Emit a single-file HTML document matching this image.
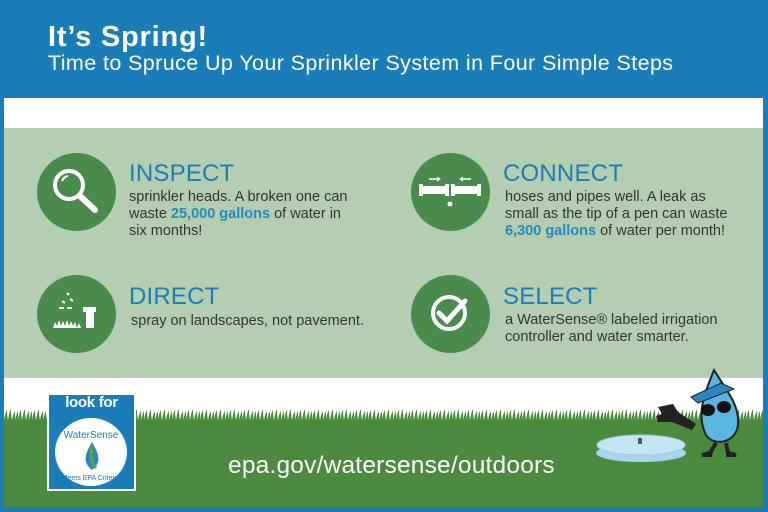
<!DOCTYPE html>
<html><head><meta charset="utf-8"><style>
*{margin:0;padding:0;box-sizing:border-box}
body{width:768px;height:512px;overflow:hidden;background:#1a7db8;position:relative;font-family:"Liberation Sans",Arial,sans-serif}
.abs{position:absolute}
h1{position:absolute;left:48px;top:21px;color:#fff;font-size:29px;font-weight:bold;letter-spacing:0.8px}
h2{position:absolute;left:48px;top:51px;color:#fff;font-size:21.5px;font-weight:normal;letter-spacing:0.4px}
.white{left:4px;top:98px;width:759px;height:409px;background:#fff}
.lg{left:4px;top:128px;width:759px;height:250px;background:#b3ceb0}
.grass{left:4px;top:428px;width:759px;height:79px;background:#4b8a3f}
.circ{width:79px;height:78px;border-radius:50%;background:#4a8a4c}
.t{color:#1f7bb5;font-size:24px;letter-spacing:0.2px}
.p{color:#333;font-size:14.5px;line-height:17px}
.p b{color:#2a86c0}
.url{left:228px;top:452px;color:#fff;font-size:24.5px;letter-spacing:0.2px}
</style></head><body>
<h1>It’s Spring!</h1>
<h2>Time to Spruce Up Your Sprinkler System in Four Simple Steps</h2>
<div class="abs white"></div>
<div class="abs lg"></div>
<div class="abs grass"></div>
<svg class="abs" style="left:4px;top:408px" width="759" height="24"><defs><pattern id="g" width="14" height="24" patternUnits="userSpaceOnUse"><path d="M0 24 L0 12 Q1 5 3 2 Q3 8 4 12 Q5 5 7 1 Q7 8 8 12 Q9 6 11 3 Q11 8 11.5 12 Q12.5 5 14 3 L14 24Z" fill="#4b8a3f"/></pattern></defs><rect width="759" height="24" fill="url(#g)"/></svg>

<div class="abs circ" style="left:37px;top:153px"></div>
<svg class="abs" style="left:37px;top:153px" width="79" height="78"><circle cx="32" cy="32" r="14" fill="none" stroke="#fff" stroke-width="4"/><line x1="43" y1="43" x2="58" y2="57" stroke="#fff" stroke-width="6" stroke-linecap="round"/><path d="M25 28 a8 8 0 0 1 6 -5" stroke="#fff" stroke-width="2" fill="none"/></svg>
<div class="abs t" style="left:129px;top:160px">INSPECT</div>
<div class="abs p" style="left:129px;top:189px">sprinkler heads. A broken one can<br>waste <b>25,000 gallons</b> of water in<br>six months!</div>

<div class="abs circ" style="left:37px;top:275px"></div>
<svg class="abs" style="left:37px;top:275px" width="79" height="78"><g stroke="#fff" stroke-width="2"><line x1="30" y1="18" x2="32" y2="20"/><line x1="33" y1="24" x2="36" y2="26"/><line x1="25" y1="26" x2="28" y2="28"/><line x1="22" y1="33" x2="27" y2="33"/><line x1="30" y1="33" x2="35" y2="33"/></g><rect x="46" y="32" width="13" height="5" fill="#fff"/><rect x="49" y="36" width="8" height="17" fill="#fff"/><path d="M16 53 l2 -6 l2 4 l2 -6 l2 6 l2 -5 l2 5 l2 -6 l2 6 l2 -5 l2 5 l2 -4 l2 6 l2 -5 l2 5 Z" fill="#fff"/></svg>
<div class="abs t" style="left:129px;top:283px">DIRECT</div>
<div class="abs p" style="left:131px;top:313px">spray on landscapes, not pavement.</div>

<div class="abs circ" style="left:411px;top:153px"></div>
<svg class="abs" style="left:411px;top:153px" width="79" height="78"><g fill="#fff"><rect x="10" y="33" width="26" height="8"/><rect x="8" y="31" width="4" height="12"/><rect x="34" y="31" width="4" height="12"/><rect x="42" y="33" width="26" height="8"/><rect x="40" y="31" width="4" height="12"/><rect x="66" y="31" width="4" height="12"/><circle cx="39" cy="51" r="2.5"/><path d="M30 26 l-4 -2.5 l0 5z M48 26 l4 -2.5 l0 5z"/></g><g stroke="#fff" stroke-width="1.5"><line x1="18" y1="26" x2="28" y2="26"/><line x1="50" y1="26" x2="60" y2="26"/></g></svg>
<div class="abs t" style="left:503px;top:160px">CONNECT</div>
<div class="abs p" style="left:505px;top:189px">hoses and pipes well. A leak as<br>small as the tip of a pen can waste<br><b>6,300 gallons</b> of water per month!</div>

<div class="abs circ" style="left:411px;top:275px"></div>
<svg class="abs" style="left:411px;top:275px" width="79" height="78"><circle cx="38" cy="38" r="16" fill="none" stroke="#fff" stroke-width="4"/><path d="M28 38 l8 8 l18 -20" fill="none" stroke="#fff" stroke-width="5" stroke-linecap="round"/></svg>
<div class="abs t" style="left:503px;top:283px">SELECT</div>
<div class="abs p" style="left:505px;top:312px">a WaterSense® labeled irrigation<br>controller and water smarter.</div>

<div class="abs" style="left:47px;top:393px;width:89px;height:98px;background:#1a7db8;border:2px solid #fff"></div>
<div class="abs" style="left:47px;top:394px;width:89px;text-align:center;color:#fff;font-weight:bold;font-size:15px;letter-spacing:-0.3px">look for</div>
<svg class="abs" style="left:52px;top:416px" width="80" height="72"><ellipse cx="39" cy="36" rx="36" ry="34" fill="#fff"/><text x="39" y="22" text-anchor="middle" font-size="10" fill="#1a7db8" font-family="Liberation Sans">WaterSense</text><path d="M40 26 C33 38 30 46 40 54 C50 46 47 38 40 26Z" fill="#2a86c0"/><path d="M40 30 C38 40 40 48 44 52" stroke="#5aa54a" stroke-width="3" fill="none"/><text x="39" y="64" text-anchor="middle" font-size="7" fill="#1a7db8" font-family="Liberation Sans">Meets EPA Criteria</text></svg>
<div class="abs url">epa.gov/watersense/outdoors</div>

<svg class="abs" style="left:596px;top:365px" width="168" height="100"><ellipse cx="45" cy="88" rx="45" ry="9" fill="#a9d4ea"/><ellipse cx="45" cy="80" rx="44" ry="10" fill="#c6e4f2" stroke="#9ccbe3"/><rect x="42" y="73" width="4" height="6" fill="#555"/><path d="M118 5 C108 30 100 50 110 70 C118 82 140 78 142 60 C144 40 130 25 118 5Z" fill="#5ab6e0" stroke="#222" stroke-width="2"/><path d="M95 32 L125 18 L138 24 L102 38Z" fill="#2a86c0" stroke="#222"/><ellipse cx="112" cy="45" rx="7" ry="6" fill="#111"/><ellipse cx="128" cy="42" rx="7" ry="6" fill="#111"/><path d="M62 42 l15 -3 l5 8 l18 12 l-4 6 l-20 -8 l-14 0 l-2 -6 l6 -2Z" fill="#222"/><path d="M120 78 l-6 10 l-8 2 l10 0 M130 78 l2 10 l8 2 l-10 0" stroke="#222" stroke-width="4" fill="#222"/></svg>
</body></html>
